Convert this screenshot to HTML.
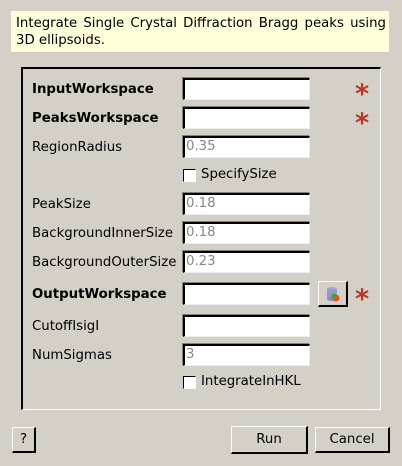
<!DOCTYPE html>
<html><head><style>
body{margin:0;width:402px;height:466px;background:#d4d0c8;position:relative;overflow:hidden;font-family:"DejaVu Sans","Liberation Sans",sans-serif;font-size:13.3px;color:#000}
.a{position:absolute}
.desc{left:11px;top:11px;width:378px;height:41px;background:#ffffdc;border-left:1px solid #fff;border-top:1px solid #fff;padding:3px 3px 0 4px;line-height:17px;font-size:13.3px;box-sizing:border-box}
.desc span{display:block;text-align:justify;text-align-last:justify}
.grp{left:21px;top:67px;width:360px;height:343px;border-left:2px solid #000;border-top:2px solid #000;border-right:1px solid #fff;border-bottom:1px solid #fff;box-sizing:border-box}
.lb{left:32px;height:22px;line-height:23px}
.b{font-weight:bold}
.in{left:183px;width:127px;height:22px;background:#fff;box-sizing:border-box;border-top:2px solid #000;border-left:2px solid #000;border-right:1px solid #eee;border-bottom:1px solid #eee;box-shadow:-1px -1px 0 #808080;color:#888;line-height:18px;padding-left:1px}
.st{left:355px;color:#b8362a;font-size:27px;font-weight:bold;line-height:22px;height:22px}
.cb{left:183px;width:11px;height:11px;background:#fff;border-top:1px solid #000;border-left:1px solid #000;border-right:1px solid #fff;border-bottom:1px solid #fff}
.btn{height:26px;box-sizing:border-box;border-top:1px solid #fff;border-left:1px solid #fff;border-right:2px solid #000;border-bottom:2px solid #000;text-align:center;line-height:23px;background:#d4d0c8}
</style></head><body>
<div class="a desc"><span>Integrate Single Crystal Diffraction Bragg peaks using</span>3D ellipsoids.</div>
<div class="a grp"></div>

<div class="a lb b" style="top:78px">InputWorkspace</div>
<div class="a in" style="top:78px"></div>
<div class="a st" style="top:84px">*</div>

<div class="a lb b" style="top:107px">PeaksWorkspace</div>
<div class="a in" style="top:107px"></div>
<div class="a st" style="top:113px">*</div>

<div class="a lb" style="top:136px">RegionRadius</div>
<div class="a in" style="top:136px">0.35</div>

<div class="a cb" style="top:169px"></div>
<div class="a" style="left:201px;top:166px;line-height:18px">SpecifySize</div>

<div class="a lb" style="top:193px">PeakSize</div>
<div class="a in" style="top:193px">0.18</div>

<div class="a lb" style="top:222px">BackgroundInnerSize</div>
<div class="a in" style="top:222px">0.18</div>

<div class="a lb" style="top:251px">BackgroundOuterSize</div>
<div class="a in" style="top:251px">0.23</div>

<div class="a lb b" style="top:283px">OutputWorkspace</div>
<div class="a in" style="top:283px"></div>
<div class="a btn" style="left:318px;top:281px;width:30px;height:26px">
<svg width="20" height="20" viewBox="0 0 20 20" style="margin-top:2px"><ellipse cx="9" cy="5" rx="5" ry="2" fill="#a8a8d8"/><rect x="4" y="5" width="10" height="10" fill="#9898c8"/><ellipse cx="9" cy="15" rx="5" ry="2" fill="#8888b8"/><circle cx="13" cy="14" r="3.5" fill="#e85020"/><circle cx="11" cy="12" r="2.5" fill="#30b030"/></svg></div>
<div class="a st" style="top:289px">*</div>

<div class="a lb" style="top:315px">CutoffIsigI</div>
<div class="a in" style="top:315px"></div>

<div class="a lb" style="top:344px">NumSigmas</div>
<div class="a in" style="top:344px">3</div>

<div class="a cb" style="top:376px"></div>
<div class="a" style="left:201px;top:373px;line-height:18px">IntegrateInHKL</div>

<div class="a btn" style="left:12px;top:427px;width:24px">?</div>
<div class="a btn" style="left:231px;top:426px;width:77px;height:28px;line-height:25px">Run</div>
<div class="a btn" style="left:315px;top:427px;width:75px">Cancel</div>
</body></html>
